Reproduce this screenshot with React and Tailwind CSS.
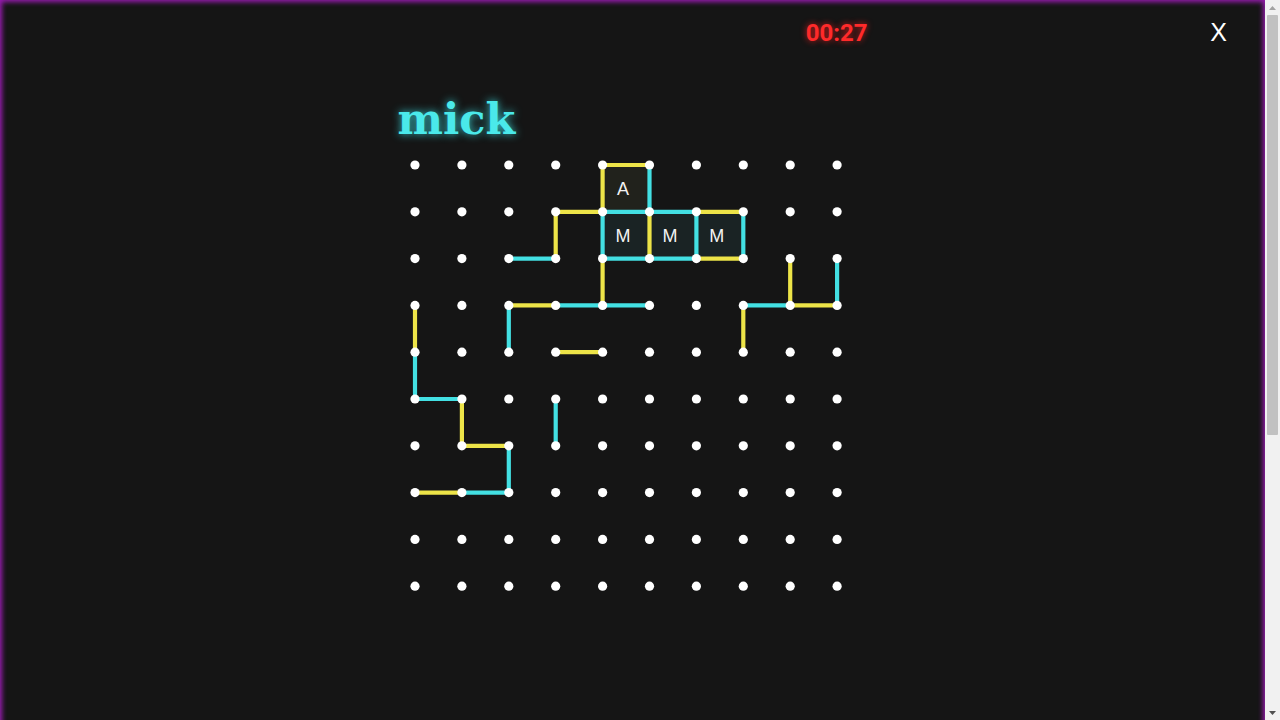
import { useMemo } from 'react';

const YELLOW = '#ede448';
const CYAN = '#43e0e3';

const COL0 = 17;
const ROW0 = 14;
const STEP_X = 46.9;
const STEP_Y = 46.8;

const px = (c) => COL0 + c * STEP_X;
const py = (r) => ROW0 + r * STEP_Y;

// edges as [c1, r1, c2, r2, colour]
const EDGES = [
  [4, 0, 5, 0, 'y'],
  [4, 0, 4, 1, 'y'],
  [5, 0, 5, 1, 'c'],
  [3, 1, 4, 1, 'y'],
  [3, 1, 3, 2, 'y'],
  [2, 2, 3, 2, 'c'],
  [4, 1, 5, 1, 'c'],
  [5, 1, 6, 1, 'c'],
  [6, 1, 7, 1, 'y'],
  [4, 1, 4, 2, 'c'],
  [5, 1, 5, 2, 'y'],
  [6, 1, 6, 2, 'c'],
  [7, 1, 7, 2, 'c'],
  [4, 2, 5, 2, 'c'],
  [5, 2, 6, 2, 'c'],
  [6, 2, 7, 2, 'y'],
  [4, 2, 4, 3, 'y'],
  [2, 3, 3, 3, 'y'],
  [3, 3, 4, 3, 'c'],
  [4, 3, 5, 3, 'c'],
  [2, 3, 2, 4, 'c'],
  [3, 4, 4, 4, 'y'],
  [0, 3, 0, 4, 'y'],
  [0, 4, 0, 5, 'c'],
  [0, 5, 1, 5, 'c'],
  [1, 5, 1, 6, 'y'],
  [1, 6, 2, 6, 'y'],
  [2, 6, 2, 7, 'c'],
  [0, 7, 1, 7, 'y'],
  [1, 7, 2, 7, 'c'],
  [3, 5, 3, 6, 'c'],
  [7, 3, 8, 3, 'c'],
  [8, 3, 9, 3, 'y'],
  [7, 3, 7, 4, 'y'],
  [8, 2, 8, 3, 'y'],
  [9, 2, 9, 3, 'c'],
];

// claimed boxes: top-left corner and letter
const BOXES = [
  { c: 4, r: 0, letter: 'A', fill: '#21221c' },
  { c: 4, r: 1, letter: 'M', fill: '#1a2324' },
  { c: 5, r: 1, letter: 'M', fill: '#1a2324' },
  { c: 6, r: 1, letter: 'M', fill: '#1a2324' },
];

function Board() {
  const dots = useMemo(() => {
    const list = [];
    for (let r = 0; r < 10; r++) {
      for (let c = 0; c < 10; c++) list.push([c, r]);
    }
    return list;
  }, []);

  return (
    <svg width="470" height="460" viewBox="0 0 470 460" className="block">
      {BOXES.map((b, i) => (
        <g key={i}>
          <rect x={px(b.c)} y={py(b.r)} width={STEP_X} height={STEP_Y} fill={b.fill} />
          <text
            x={px(b.c) + STEP_X / 2 - 3}
            y={py(b.r) + STEP_Y / 2 + 6.5}
            textAnchor="middle"
            fill="#f2f2f2"
            fontSize="18"
            fontFamily="'Liberation Sans', Arial, sans-serif"
          >
            {b.letter}
          </text>
        </g>
      ))}
      {EDGES.map(([c1, r1, c2, r2, k], i) => (
        <line
          key={i}
          x1={px(c1)}
          y1={py(r1)}
          x2={px(c2)}
          y2={py(r2)}
          stroke={k === 'y' ? YELLOW : CYAN}
          strokeWidth="4.2"
        />
      ))}
      {dots.map(([c, r]) => (
        <circle key={`${c}-${r}`} cx={px(c)} cy={py(r)} r="4.6" fill="#ffffff" />
      ))}
    </svg>
  );
}

function Scrollbar() {
  return (
    <div className="flex h-[720px] w-[15px] flex-col bg-[#f1f1f1]">
      <div className="flex h-[15px] items-center justify-center">
        <svg width="7" height="4" viewBox="0 0 7 4">
          <path d="M0 4 L3.5 0 L7 4 Z" fill="#a3a3a3" />
        </svg>
      </div>
      <div className="mx-[2px] h-[420px] rounded-[1px] bg-[#c1c1c1]" />
      <div className="flex-1" />
      <div className="flex h-[15px] items-center justify-center">
        <svg width="7" height="4" viewBox="0 0 7 4">
          <path d="M0 0 L3.5 4 L7 0 Z" fill="#505050" />
        </svg>
      </div>
    </div>
  );
}

export default function App() {
  return (
    <div className="flex h-[720px] overflow-hidden">
      <div className="h-[1180px] flex-1 bg-[#151515] shadow-[inset_0_0_5px_2px_#9a1cb2]">
        <div className="grid grid-cols-[1fr_470px_1fr]">
          <div />
          <div className="flex justify-end pt-[17px]">
            <span
              className="text-[24px] font-bold leading-[32px] text-[#ff2a2a] [text-shadow:0_0_6px_rgba(255,30,30,0.8)]"
              style={{ fontFamily: "Roboto, 'Liberation Sans', sans-serif" }}
            >
              00:27
            </span>
          </div>
          <div className="flex justify-end pr-[38px] pt-[15px]">
            <button
              className="text-[25px] leading-[32px] text-white"
              style={{ fontFamily: "'Liberation Sans', Arial, sans-serif" }}
            >
              X
            </button>
          </div>
        </div>

        <div className="mx-auto w-[470px] pt-[42px]">
          <div
            className="text-[43px] font-bold leading-[56px] text-[#4ae9ea] [text-shadow:0_0_8px_rgba(60,230,235,0.85)]"
            style={{ fontFamily: "'DejaVu Serif', serif" }}
          >
            mick
          </div>
          <div className="mt-[4px]">
            <Board />
          </div>
        </div>
      </div>
      <Scrollbar />
    </div>
  );
}
